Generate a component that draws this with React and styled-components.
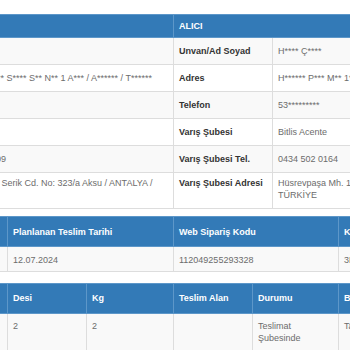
import React from "react";
import styled, { createGlobalStyle } from "styled-components";

const GlobalStyle = createGlobalStyle`
  html, body {
    margin: 0;
    padding: 0;
    background: #fff;
    overflow: hidden;
  }
  body {
    font-family: "Liberation Sans", Arial, sans-serif;
  }
`;

const Page = styled.div`
  width: 650px;
  margin-left: -200px;
  padding-top: 14px;
`;

const Table = styled.table`
  width: 650px;
  table-layout: fixed;
  border-collapse: collapse;
  margin-bottom: ${(props) => props.gap || 0}px;
  font-size: 9px;
  line-height: 12px;
`;

const Th = styled.th`
  background: #337ab7;
  color: #fff;
  font-weight: bold;
  text-align: left;
  padding: ${(props) => props.pad || "5px 5px 5px"};
  border: 1px solid #5d97c9;
  white-space: nowrap;
  overflow: hidden;
`;

const Row = styled.tr`
  background: ${(props) => (props.odd ? "#f9f9f9" : "#fff")};
`;

const Label = styled.td`
  color: #333;
  font-weight: bold;
  padding: ${(props) => (props.tall ? "4px 5px 7px" : "7px 5px")};
  vertical-align: top;
  border: 1px solid #ddd;
  white-space: nowrap;
`;

const Value = styled.td`
  color: #6c6c6c;
  padding: ${(props) => props.pad || "7px 5px"};
  vertical-align: top;
  border: 1px solid #ddd;
  white-space: ${(props) => (props.wrap ? "normal" : "nowrap")};
  overflow: hidden;
`;

const senderRows = [
  ["Unvan/Ad Soyad", "", "Unvan/Ad Soyad", "H**** Ç****"],
  [
    "Adres",
    "M******* K***** S**** S** N** 1 A*** / A****** / T******",
    "Adres",
    "H****** P*** M** 1**** S**** / B***** / T******",
  ],
  ["Telefon", "", "Telefon", "53*********"],
  ["Çıkış Şubesi", "", "Varış Şubesi", "Bitlis Acente"],
  ["Çıkış Şubesi Tel.", "0242 745 0809", "Varış Şubesi Tel.", "0434 502 0164"],
];

const App = () => {
  return (
    <React.Fragment>
      <GlobalStyle />
      <Page>
        <Table gap={7}>
          <colgroup>
            <col style={{ width: 140 }} />
            <col style={{ width: 233 }} />
            <col style={{ width: 99 }} />
            <col style={{ width: 178 }} />
          </colgroup>
          <thead>
            <tr>
              <Th colSpan={2}>GÖNDERİCİ</Th>
              <Th colSpan={2}>ALICI</Th>
            </tr>
          </thead>
          <tbody>
            {senderRows.map((row, i) => (
              <Row key={i} odd={i % 2 === 0}>
                <Label>{row[0]}</Label>
                <Value>{row[1]}</Value>
                <Label>{row[2]}</Label>
                <Value>{row[3]}</Value>
              </Row>
            ))}
            <Row>
              <Label tall>Çıkış Şubesi Adresi</Label>
              <Value wrap pad="4px 5px 7px">
                Kurşunlu Mh. Serik Cd. No: 323/a Aksu / ANTALYA / TÜRKİYE
              </Value>
              <Label tall>Varış Şubesi Adresi</Label>
              <Value wrap pad="4px 5px 7px">
                Hüsrevpaşa Mh. 1. Cad. No: 12 / BİTLİS / TÜRKİYE
              </Value>
            </Row>
          </tbody>
        </Table>

        <Table gap={11}>
          <colgroup>
            <col style={{ width: 207 }} />
            <col style={{ width: 166 }} />
            <col style={{ width: 165 }} />
            <col style={{ width: 112 }} />
          </colgroup>
          <thead>
            <tr>
              <Th pad="9px 5px 8px">Gönderi Tarihi</Th>
              <Th pad="9px 5px 8px">Planlanan Teslim Tarihi</Th>
              <Th pad="9px 5px 8px">Web Sipariş Kodu</Th>
              <Th pad="9px 5px 8px">Kargo Takip No</Th>
            </tr>
          </thead>
          <tbody>
            <Row odd>
              <Value pad="7px 5px 5px">10.07.2024</Value>
              <Value pad="7px 5px 5px">12.07.2024</Value>
              <Value pad="7px 5px 5px">112049255293328</Value>
              <Value pad="7px 5px 5px">3E240710512</Value>
            </Row>
          </tbody>
        </Table>

        <Table>
          <colgroup>
            <col style={{ width: 207 }} />
            <col style={{ width: 79 }} />
            <col style={{ width: 87 }} />
            <col style={{ width: 79 }} />
            <col style={{ width: 86 }} />
            <col style={{ width: 112 }} />
          </colgroup>
          <thead>
            <tr>
              <Th pad="8px 5px 9px">Adet</Th>
              <Th pad="8px 5px 9px">Desi</Th>
              <Th pad="8px 5px 9px">Kg</Th>
              <Th pad="8px 5px 9px">Teslim Alan</Th>
              <Th pad="8px 5px 9px">Durumu</Th>
              <Th pad="8px 5px 9px">Bulunduğu Yer</Th>
            </tr>
          </thead>
          <tbody>
            <Row odd>
              <Value pad="6px 5px 8px">1</Value>
              <Value pad="6px 5px 8px">2</Value>
              <Value pad="6px 5px 8px">2</Value>
              <Value pad="6px 5px 8px"></Value>
              <Value wrap pad="6px 5px 8px">
                Teslimat Şubesinde
              </Value>
              <Value pad="6px 5px 8px">Tatvan Şube</Value>
            </Row>
          </tbody>
        </Table>
      </Page>
    </React.Fragment>
  );
};

export default App;
